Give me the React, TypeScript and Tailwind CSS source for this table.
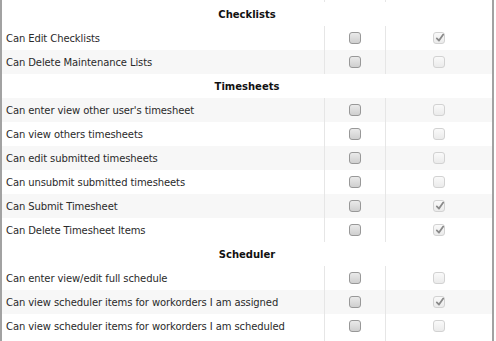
import React from "react";

type Perm = { label: string; a: boolean; b: boolean; shaded?: boolean };
type Section = { title: string; rows: Perm[] };

const sections: Section[] = [
  {
    title: "Checklists",
    rows: [
      { label: "Can Edit Checklists", a: false, b: true },
      { label: "Can Delete Maintenance Lists", a: false, b: false, shaded: true },
    ],
  },
  {
    title: "Timesheets",
    rows: [
      { label: "Can enter view other user's timesheet", a: false, b: false, shaded: true },
      { label: "Can view others timesheets", a: false, b: false },
      { label: "Can edit submitted timesheets", a: false, b: false, shaded: true },
      { label: "Can unsubmit submitted timesheets", a: false, b: false },
      { label: "Can Submit Timesheet", a: false, b: true, shaded: true },
      { label: "Can Delete Timesheet Items", a: false, b: true },
    ],
  },
  {
    title: "Scheduler",
    rows: [
      { label: "Can enter view/edit full schedule", a: false, b: false },
      { label: "Can view scheduler items for workorders I am assigned", a: false, b: true, shaded: true },
      { label: "Can view scheduler items for workorders I am scheduled", a: false, b: false },
    ],
  },
];

function Box({ checked, disabled }: { checked: boolean; disabled: boolean }) {
  return (
    <span
      className={
        "relative inline-block h-[12px] w-[12px] rounded-[3px] border " +
        (disabled
          ? "border-[#d2d2d2] bg-gradient-to-b from-[#fafafa] to-[#ebebeb]"
          : "border-[#989898] bg-gradient-to-b from-[#eaeaea] to-[#cfcfcf]")
      }
    >
      {checked && (
        <svg viewBox="0 0 12 12" className="absolute left-[0px] top-[-1px] h-[12px] w-[12px]">
          <path d="M2.8 6.4 L5 8.6 L9.2 2.6" fill="none" stroke="#8a8a8a" strokeWidth="1.8" strokeLinecap="round" strokeLinejoin="round" />
        </svg>
      )}
    </span>
  );
}

function Row({ p }: { p: Perm }) {
  return (
    <div className={"flex h-[24px] items-stretch " + (p.shaded ? "bg-[#f7f7f7]" : "bg-white")}>
      <div className="flex w-[322px] items-center pl-[4px] text-[#2a2a2a]">{p.label}</div>
      <div className="flex w-[61px] items-center justify-center border-l border-[#e6e6e6]">
        <Box checked={p.a} disabled={false} />
      </div>
      <div className="flex w-[107px] items-center justify-center border-l border-[#e6e6e6]">
        <Box checked={p.b} disabled={true} />
      </div>
    </div>
  );
}

export default function App() {
  return (
    <div className="h-[341px] w-[496px] overflow-hidden bg-white">
      <div
        className="h-[341px] w-[494px] border-x-2 border-[#a2a2a2] text-[10px] tracking-[-0.1px]"
        style={{ fontFamily: '"Lucida Grande", "DejaVu Sans", sans-serif' }}
      >
        <div className="flex h-[2px]">
          <div className="w-[322px]" />
          <div className="w-[61px] border-l border-[#e6e6e6]" />
          <div className="w-[107px] border-l border-[#e6e6e6]" />
        </div>
        {sections.map((s) => (
          <div key={s.title}>
            <div className="flex h-[24px] items-center justify-center font-bold tracking-normal text-[#111]">{s.title}</div>
            {s.rows.map((p) => (
              <Row key={p.label} p={p} />
            ))}
          </div>
        ))}
        <div className="flex h-[3px]">
          <div className="w-[322px]" />
          <div className="w-[61px] border-l border-[#e6e6e6]" />
          <div className="w-[107px] border-l border-[#e6e6e6]" />
        </div>
      </div>
    </div>
  );
}
